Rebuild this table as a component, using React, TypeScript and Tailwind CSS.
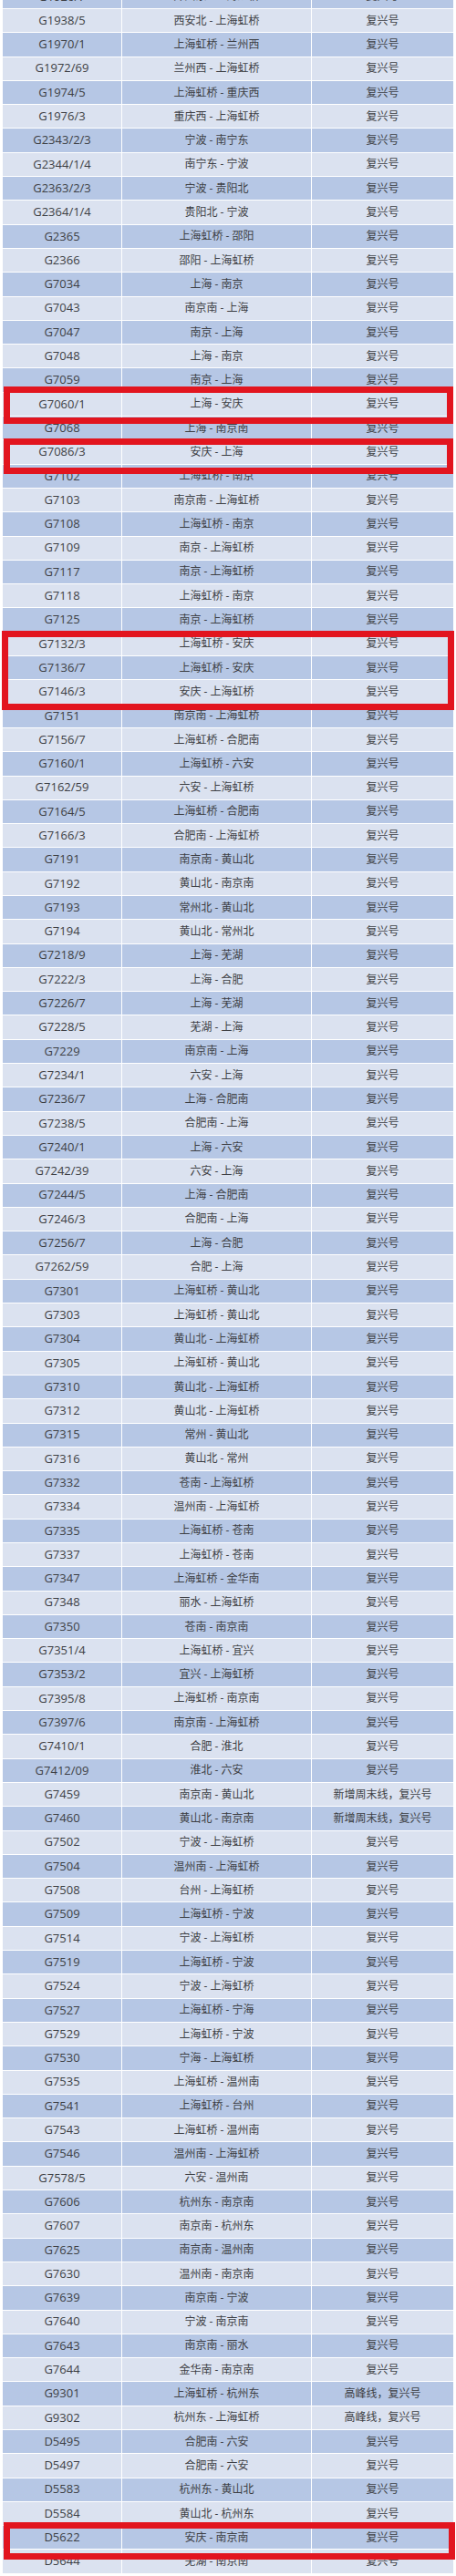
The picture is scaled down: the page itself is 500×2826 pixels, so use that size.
// 复兴号 列车时刻表截图（含红框标注）
const FX = "复兴号";

// [车次, 区间, 备注]
const rows: [string, string, string?][] = [
  ["G1926/7", "郑州东 - 上海虹桥"],
  ["G1938/5", "西安北 - 上海虹桥"],
  ["G1970/1", "上海虹桥 - 兰州西"],
  ["G1972/69", "兰州西 - 上海虹桥"],
  ["G1974/5", "上海虹桥 - 重庆西"],
  ["G1976/3", "重庆西 - 上海虹桥"],
  ["G2343/2/3", "宁波 - 南宁东"],
  ["G2344/1/4", "南宁东 - 宁波"],
  ["G2363/2/3", "宁波 - 贵阳北"],
  ["G2364/1/4", "贵阳北 - 宁波"],
  ["G2365", "上海虹桥 - 邵阳"],
  ["G2366", "邵阳 - 上海虹桥"],
  ["G7034", "上海 - 南京"],
  ["G7043", "南京南 - 上海"],
  ["G7047", "南京 - 上海"],
  ["G7048", "上海 - 南京"],
  ["G7059", "南京 - 上海"],
  ["G7060/1", "上海 - 安庆"],
  ["G7068", "上海 - 南京南"],
  ["G7086/3", "安庆 - 上海"],
  ["G7102", "上海虹桥 - 南京"],
  ["G7103", "南京南 - 上海虹桥"],
  ["G7108", "上海虹桥 - 南京"],
  ["G7109", "南京 - 上海虹桥"],
  ["G7117", "南京 - 上海虹桥"],
  ["G7118", "上海虹桥 - 南京"],
  ["G7125", "南京 - 上海虹桥"],
  ["G7132/3", "上海虹桥 - 安庆"],
  ["G7136/7", "上海虹桥 - 安庆"],
  ["G7146/3", "安庆 - 上海虹桥"],
  ["G7151", "南京南 - 上海虹桥"],
  ["G7156/7", "上海虹桥 - 合肥南"],
  ["G7160/1", "上海虹桥 - 六安"],
  ["G7162/59", "六安 - 上海虹桥"],
  ["G7164/5", "上海虹桥 - 合肥南"],
  ["G7166/3", "合肥南 - 上海虹桥"],
  ["G7191", "南京南 - 黄山北"],
  ["G7192", "黄山北 - 南京南"],
  ["G7193", "常州北 - 黄山北"],
  ["G7194", "黄山北 - 常州北"],
  ["G7218/9", "上海 - 芜湖"],
  ["G7222/3", "上海 - 合肥"],
  ["G7226/7", "上海 - 芜湖"],
  ["G7228/5", "芜湖 - 上海"],
  ["G7229", "南京南 - 上海"],
  ["G7234/1", "六安 - 上海"],
  ["G7236/7", "上海 - 合肥南"],
  ["G7238/5", "合肥南 - 上海"],
  ["G7240/1", "上海 - 六安"],
  ["G7242/39", "六安 - 上海"],
  ["G7244/5", "上海 - 合肥南"],
  ["G7246/3", "合肥南 - 上海"],
  ["G7256/7", "上海 - 合肥"],
  ["G7262/59", "合肥 - 上海"],
  ["G7301", "上海虹桥 - 黄山北"],
  ["G7303", "上海虹桥 - 黄山北"],
  ["G7304", "黄山北 - 上海虹桥"],
  ["G7305", "上海虹桥 - 黄山北"],
  ["G7310", "黄山北 - 上海虹桥"],
  ["G7312", "黄山北 - 上海虹桥"],
  ["G7315", "常州 - 黄山北"],
  ["G7316", "黄山北 - 常州"],
  ["G7332", "苍南 - 上海虹桥"],
  ["G7334", "温州南 - 上海虹桥"],
  ["G7335", "上海虹桥 - 苍南"],
  ["G7337", "上海虹桥 - 苍南"],
  ["G7347", "上海虹桥 - 金华南"],
  ["G7348", "丽水 - 上海虹桥"],
  ["G7350", "苍南 - 南京南"],
  ["G7351/4", "上海虹桥 - 宜兴"],
  ["G7353/2", "宜兴 - 上海虹桥"],
  ["G7395/8", "上海虹桥 - 南京南"],
  ["G7397/6", "南京南 - 上海虹桥"],
  ["G7410/1", "合肥 - 淮北"],
  ["G7412/09", "淮北 - 六安"],
  ["G7459", "南京南 - 黄山北", "新增周末线，复兴号"],
  ["G7460", "黄山北 - 南京南", "新增周末线，复兴号"],
  ["G7502", "宁波 - 上海虹桥"],
  ["G7504", "温州南 - 上海虹桥"],
  ["G7508", "台州 - 上海虹桥"],
  ["G7509", "上海虹桥 - 宁波"],
  ["G7514", "宁波 - 上海虹桥"],
  ["G7519", "上海虹桥 - 宁波"],
  ["G7524", "宁波 - 上海虹桥"],
  ["G7527", "上海虹桥 - 宁海"],
  ["G7529", "上海虹桥 - 宁波"],
  ["G7530", "宁海 - 上海虹桥"],
  ["G7535", "上海虹桥 - 温州南"],
  ["G7541", "上海虹桥 - 台州"],
  ["G7543", "上海虹桥 - 温州南"],
  ["G7546", "温州南 - 上海虹桥"],
  ["G7578/5", "六安 - 温州南"],
  ["G7606", "杭州东 - 南京南"],
  ["G7607", "南京南 - 杭州东"],
  ["G7625", "南京南 - 温州南"],
  ["G7630", "温州南 - 南京南"],
  ["G7639", "南京南 - 宁波"],
  ["G7640", "宁波 - 南京南"],
  ["G7643", "南京南 - 丽水"],
  ["G7644", "金华南 - 南京南"],
  ["G9301", "上海虹桥 - 杭州东", "高峰线，复兴号"],
  ["G9302", "杭州东 - 上海虹桥", "高峰线，复兴号"],
  ["D5495", "合肥南 - 六安"],
  ["D5497", "合肥南 - 六安"],
  ["D5583", "杭州东 - 黄山北"],
  ["D5584", "黄山北 - 杭州东"],
  ["D5622", "安庆 - 南京南"],
  ["D5644", "芜湖 - 南京南"],
];

function Row({ no, route, note, dark }: { no: string; route: string; note?: string; dark: boolean }) {
  const bg = dark ? "bg-[#b6c7e5]" : "bg-[#dbe2f0]";
  return (
    <div className="flex h-[25.31px] gap-px">
      <div className={`${bg} flex w-[130px] items-center justify-center text-[13px]`}>{no}</div>
      <div className={`${bg} flex w-[207px] items-center justify-center text-[12px]`}>{route}</div>
      <div className={`${bg} flex w-[155px] items-center justify-center text-[12px]`}>{note ?? FX}</div>
    </div>
  );
}

export default function App() {
  return (
    <div
      className="relative h-[2826px] w-[500px] overflow-hidden bg-white text-[#3d3f44]"
      style={{ fontFamily: '"Open Sans", "Noto Sans CJK SC", sans-serif' }}
    >
      <div className="-mt-[16.3px] ml-[3px] flex w-[494px] flex-col gap-px">
        {rows.map(([no, route, note], i) => (
          <Row key={no} no={no} route={route} note={note} dark={i % 2 === 0} />
        ))}
      </div>

      {/* 红框标注 */}
      <div className="absolute left-[4px] top-[424px] h-[41px] w-[493px] border-[7px] border-[#e2151f]" />
      <div className="absolute left-[4px] top-[481px] h-[39px] w-[493px] border-[7px] border-[#e2151f]" />
      <div className="absolute left-[2px] top-[692px] h-[87px] w-[496px] border-[7px] border-[#e2151f]" />
      <div className="absolute left-[4px] top-[2767px] h-[41px] w-[495px] border-[7px] border-[#e2151f]" />
    </div>
  );
}
